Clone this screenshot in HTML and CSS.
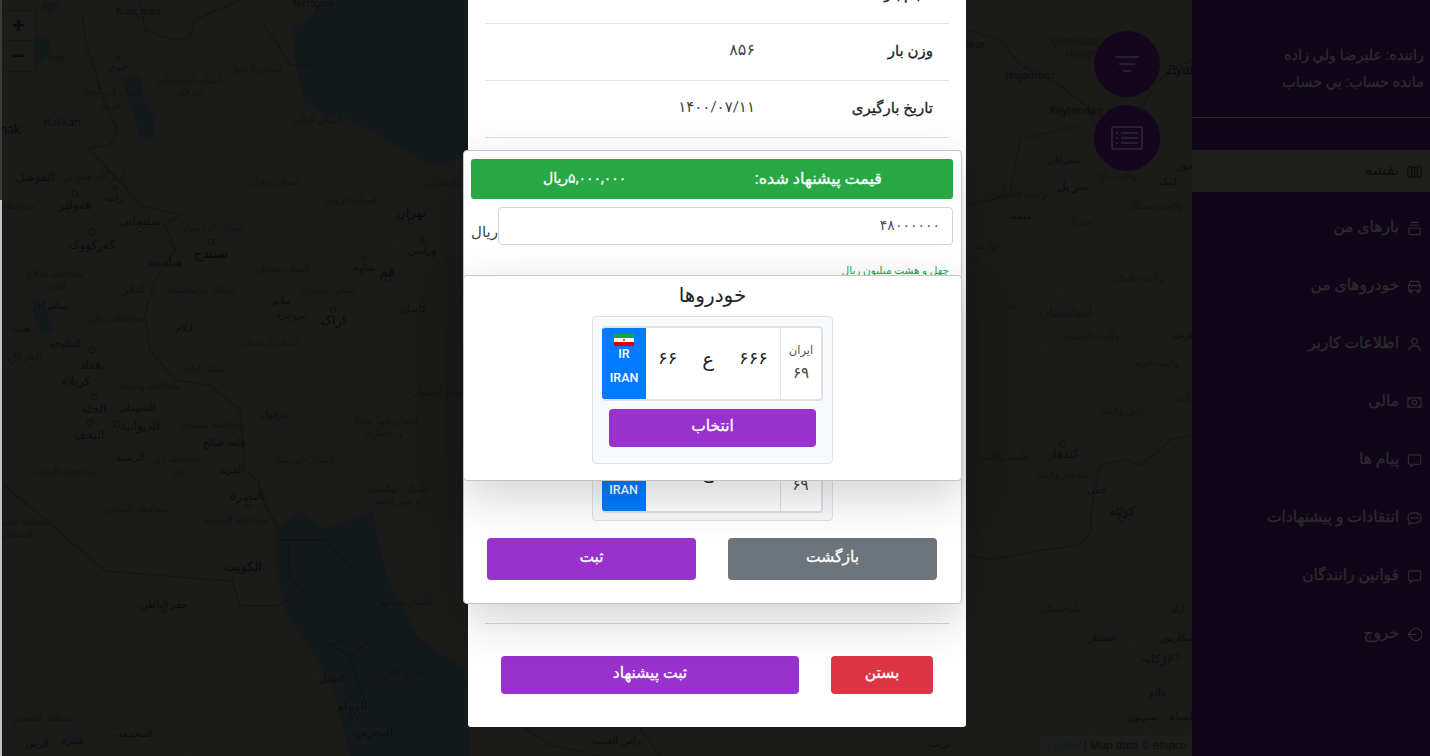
FILE: index.html
```html
<!DOCTYPE html>
<html lang="fa">

<head>
  <meta charset="UTF-8">
  <title>نقشه</title>
  <link rel="stylesheet" href="styles.css">
</head>

<body>
  <div class="page">
    <main class="map-area">
      <svg class="map" viewBox="0 0 1192 756" width="1192" height="756">
        <!-- water -->
        <path class="water" d="M322 0L306 22 293 30 296 62 304 100 318 112 345 119 368 128 400 148 432 165 470 156 470 0Z" />
        <path class="water" d="M276 530L300 512 322 528 352 520 372 510 378 540 388 580 420 640 470 672 470 756 350 756 345 735 330 680 305 640 285 610 277 570Z" />
        <path class="water" d="M122 78L140 76 143 100 155 118 152 138 140 138 133 112Z" />
        <path class="water" d="M36 36L50 40 48 55 38 65 34 50Z" />
        <path class="water" d="M33 297L46 305 52 330 44 334 34 318Z" />
        <path class="water" d="M70 735L82 735 76 745Z" />
        <!-- countries -->
        <path class="border" d="M82 15L86 45 95 70 103 100 118 130 110 145 88 148 128 190 140 205 180 215 165 225 175 250 155 280 145 315 150 350 175 380 210 385 240 410 245 470 258 480 265 505 280 530" />
        <path class="border" d="M2 483L105 571 190 578 232 581 240 605 243 606 277 606 303 590 290 580 288 540" />
        <path class="border-thin" d="M280 540L325 540 385 605 470 690M290 606L330 645 345 640M330 645L350 655 370 640 350 660 365 700" />
        <path class="border" d="M140 0L145 30 172 40 190 38 195 20 240 0M260 20L275 40 290 65 312 65" />
        <path class="border" d="M968 30L1000 40 1020 65 1060 85 1085 105 1100 130 1140 110 1155 85 1170 70 1192 60M968 205L1010 195 1020 140 1080 125" />
        <path class="border" d="M968 555L990 560 1030 552 1080 545 1092 530 1090 520 1095 490 1100 465 1125 460 1140 465 1160 450 1170 440 1192 435" />
        <!-- provinces -->
        <path class="prov" d="M170 85L200 130 230 160 250 135 280 155 310 165 330 185 350 195 380 210 411 220 440 210M200 130L170 170 130 190M250 135L240 165 250 200 290 220 300 260 330 250 360 260 400 240M210 240L220 280 250 300 290 295 310 340 300 380M290 295L340 300 370 270 400 240M310 340L360 320 400 350 440 380M300 380L350 420 400 390 460 430M350 420L370 470 420 500 470 540" />
        <path class="prov" d="M0 200L60 195 110 180M60 195L70 240 130 270 150 300 180 310M70 240L30 270 0 290M60 300L90 350 130 360 170 380M2 360L60 400 50 470 110 440 130 400M130 400L200 470 240 470M110 440L190 490 260 500 235 560 240 600M2 640L100 590 165 610 300 665 340 690 360 730M165 610L150 690 130 735 70 720 0 680M70 720L130 735 190 756M320 670L290 700 300 756" />
        <path class="prov" d="M968 200L1010 175 1050 200 1100 190 1150 190 1192 190M968 270L1040 250 1110 240 1192 230M1020 250L1060 290 1110 260 1150 300 1192 320M1060 290L1040 350 1090 360 1150 320M1020 440L1040 400 1100 370 1140 400 1192 420M1020 440L1010 560M1125 460L1150 500 1170 520 1190 600M1100 520L1080 600 1060 660 1040 690 990 660 968 700M1060 660L1090 650 1140 640 1192 620M1090 650L1090 756M1130 640L1150 756M1165 650L1192 756" />
        <path class="prov" d="M500 740L550 756M880 728L930 756M600 728L640 756" />
        <path class="border" d="M525 728L550 745 600 756M640 728L660 756" />

        <!-- places -->
        <g class="labels">
          <text class="it" x="50" y="10">Ağrı</text>
          <text class="lat" x="138" y="15">Naxçıvan</text>
          <text class="lat" x="313" y="7">Neftçala</text>
          <text class="it" x="56" y="62">Van</text>
          <text class="town" x="118" y="70">خوی</text>
          <text class="prv" x="256" y="72">استان اردبیل</text>
          <text class="prv" x="190" y="83">استان آذربایجان</text>
          <text class="prv" x="190" y="95">شرقی</text>
          <text class="prv" x="111" y="95">استان آذربایجان</text>
          <text class="prv" x="111" y="108">غربی</text>
          <text class="lat" x="62" y="126">Hakkari</text>
          <text class="lat-big" x="10" y="134">nak</text>
          <text class="prv" x="318" y="123">استان گیلان</text>
          <text class="city" x="35" y="181">الموصل</text>
          <text class="prv" x="96" y="180">پارێزگای هەولێر</text>
          <text class="prv" x="274" y="185">استان زنجان</text>
          <text class="prv" x="444" y="186">مازندران</text>
          <text class="prv" x="350" y="203">استان قزوین</text>
          <text class="town" x="114" y="201">رانیه</text>
          <text class="city" x="75" y="209">هەولێر</text>
          <text class="prv" x="19" y="209">محافظة</text>
          <text class="big" x="411" y="217">تهران</text>
          <text class="city" x="140" y="225">سلێمانی</text>
          <text class="prv" x="211" y="231">استان کردستان</text>
          <text class="city" x="92" y="249">کەرکووک</text>
          <text class="big" x="211" y="258">سنندج</text>
          <text class="town" x="422" y="254">ورامین</text>
          <text class="town" x="165" y="266">هەڵەبجە</text>
          <text class="town" x="364" y="271">ساوه</text>
          <text class="prv" x="282" y="272">استان همدان</text>
          <text class="big" x="387" y="276">قم</text>
          <text class="prv" x="55" y="277">محافظة صلاح</text>
          <text class="prv" x="55" y="289">الدين</text>
          <text class="town" x="134" y="293">کەلار</text>
          <text class="prv" x="202" y="293">استان کرمانشاه</text>
          <text class="prv" x="329" y="293">استان مرکزی</text>
          <text class="town" x="281" y="304">ملایر</text>
          <text class="town" x="291" y="318">بروجرد</text>
          <text class="town" x="413" y="312">کاشان</text>
          <text class="town" x="53" y="309">سامراء</text>
          <text class="big" x="333" y="325">اراک</text>
          <text class="prv" x="116" y="322">محافظة دیالى</text>
          <text class="town" x="21" y="332">هیت</text>
          <text class="town" x="184" y="332">ایلام</text>
          <text class="town" x="65" y="347">الفلوجة</text>
          <text class="prv" x="270" y="346">استان لرستان</text>
          <text class="prv-big" x="25" y="360">العراق</text>
          <text class="city" x="92" y="369">بغداد</text>
          <text class="prv" x="205" y="372">استان ایلام</text>
          <text class="city" x="76" y="385">کربلاء</text>
          <text class="prv" x="150" y="389">محافظة واسط</text>
          <text class="prv" x="440" y="395">استان اصفهان</text>
          <text class="city" x="94" y="413">الحلة</text>
          <text class="town" x="137" y="411">الشوملي</text>
          <text class="city" x="140" y="430">الدیوانیة</text>
          <text class="city" x="89" y="439">النجف</text>
          <text class="town" x="274" y="418">دزفول</text>
          <text class="prv" x="213" y="428">محافظة میسان</text>
          <text class="town" x="224" y="446">قلعة صالح</text>
          <text class="prv" x="384" y="424">استان چهارمحال</text>
          <text class="prv" x="384" y="436">و بختیاری</text>
          <text class="town" x="130" y="461">الرمیثة</text>
          <text class="prv" x="177" y="462">محافظة ذی</text>
          <text class="prv" x="177" y="476">قار</text>
          <text class="prv" x="301" y="463">استان خوزستان</text>
          <text class="town" x="231" y="473">القرنة</text>
          <text class="prv" x="65" y="475">محافظة النجف</text>
          <text class="prv" x="397" y="492">استان کهگیلویه</text>
          <text class="prv" x="397" y="504">و بویر احمد</text>
          <text class="city" x="247" y="500">البصرة</text>
          <text class="prv" x="137" y="512">محافظة المثنى</text>
          <text class="prv" x="236" y="523">محافظة البصرة</text>
          <text class="prv" x="20" y="525">منطقة الحدود</text>
          <text class="prv" x="15" y="537">الشمالية</text>
          <text class="big" x="243" y="571">الکویت</text>
          <text class="prv" x="405" y="605">استان بوشهر</text>
          <text class="town" x="164" y="608">حفر الباطن</text>
          <text class="prv" x="400" y="676">الخليج العربي</text>
          <text class="town" x="332" y="682">الجبیل</text>
          <text class="city" x="352" y="710">الدمام</text>
          <text class="city" x="374" y="736">البحرین</text>
          <text class="prv" x="43" y="721">منطقة القصيم</text>
          <text class="town" x="135" y="737">المجمعة</text>
          <text class="town" x="73" y="744">عنیزة</text>
          <text class="town" x="37" y="747">الرس</text>
          <text class="town" x="616" y="744">رأس الخيمة</text>
          <text class="town" x="940" y="747">تربت</text>

          <text class="it" x="1081" y="45">Qashqadaryo</text>
          <text class="it" x="1081" y="57">Viloyati</text>
          <text class="lat" x="975" y="48">akar</text>
          <text class="lat" x="1030" y="79">Hojambaz</text>
          <text class="lat" x="1076" y="114">Köytendag</text>
          <text class="lat-big" x="1180" y="74">Душ</text>
          <text class="town" x="1064" y="163">شبرغان</text>
          <text class="prv" x="1117" y="179">ولایت بلخ</text>
          <text class="city" x="1073" y="190">سر پل</text>
          <text class="town" x="1168" y="185">ایبک</text>
          <text class="town" x="1186" y="169">جوز</text>
          <text class="prv" x="1020" y="197">ولایت فاریاب</text>
          <text class="prv" x="1154" y="209">ولایت سمنگان</text>
          <text class="town" x="1020" y="219">میمنه</text>
          <text class="prv" x="1080" y="225">سرپل</text>
          <text class="prv" x="985" y="249">ولایت</text>
          <text class="prv" x="1138" y="281">ولایت بامیان</text>
          <text class="prv" x="1011" y="308">غور</text>
          <text class="prv-big" x="1066" y="317">افغانستان</text>
          <text class="prv" x="1091" y="339">ولایت دایکندی</text>
          <text class="town" x="1184" y="338">غزنی</text>
          <text class="prv" x="1155" y="366">ولایت غزنی</text>
          <text class="prv" x="1183" y="401">ولایت</text>
          <text class="prv" x="1122" y="414">زابل ولایت</text>
          <text class="prv" x="1005" y="460">هلمند ولایت</text>
          <text class="city" x="1063" y="458">کندهار</text>
          <text class="prv" x="1062" y="478">کندهار ولایت</text>
          <text class="town" x="1097" y="493">چمن</text>
          <text class="city" x="1122" y="515">کوئٹه</text>
          <text class="prv" x="1060" y="612">بلوچستان</text>
          <text class="town" x="1103" y="641">خضدار</text>
          <text class="town" x="1178" y="613">آباد</text>
          <text class="town" x="1178" y="641">شکارپور</text>
          <text class="city" x="1157" y="663">لاڑکانہ</text>
          <text class="town" x="1157" y="696">دادو</text>
          <text class="town" x="1142" y="720">سیہون</text>
          <text class="town" x="1181" y="720">ابشاہ</text>
        </g>

        <g class="dots">
          <circle cx="118" cy="58" r="2" />
          <circle cx="75" cy="193" r="3" />
          <circle cx="115" cy="188" r="2" />
          <circle cx="140" cy="229" r="3" />
          <circle cx="92" cy="232" r="3" />
          <circle cx="211" cy="242" r="3" />
          <circle cx="411" cy="221" r="3" />
          <circle cx="422" cy="241" r="2" />
          <circle cx="364" cy="258" r="2" />
          <circle cx="388" cy="279" r="3" />
          <circle cx="333" cy="310" r="3" />
          <circle cx="92" cy="350" r="3" />
          <circle cx="94" cy="397" r="3" />
          <circle cx="90" cy="423" r="3" />
          <circle cx="117" cy="424" r="3" />
          <circle cx="248" cy="504" r="3" />
          <circle cx="164" cy="611" r="2" />
          <circle cx="352" cy="714" r="3" />
          <circle cx="1063" cy="444" r="3" />
          <circle cx="1122" cy="519" r="3" />
          <circle cx="1176" cy="657" r="3" />
        </g>
      </svg>

      <div class="zoom-control">
        <button class="zoom-btn zoom-btn-top">+</button>
        <button class="zoom-btn">&minus;</button>
      </div>

      <div class="attribution"><span class="attr-link">Leaflet</span> | Map data © efspco</div>

      <button class="fab fab-filter">
        <svg width="24" height="18" viewBox="0 0 24 18">
          <path d="M0 2H24M4 9H20M8 16H16" />
        </svg>
      </button>
      <button class="fab fab-list">
        <svg width="32" height="24" viewBox="0 0 32 24">
          <rect x="1" y="1" width="30" height="22" rx="1" />
          <path d="M10 7H27M10 12H27M10 17H27M5 7H7M5 12H7M5 17H7" />
        </svg>
      </button>
    </main>

    <aside class="sidebar">
      <div class="driver">
        <p>راننده: علیرضا ولي زاده</p>
        <p>مانده حساب: بي حساب</p>
      </div>
      <nav class="nav">
        <a class="nav-item active">
          <svg viewBox="0 0 16 16"><path d="M1 3C3 2 5 2 8 4 11 2 13 2 15 3V14C13 13 11 13 8 14.500 5 13 3 13 1 14ZM5 3V13M11 3V13M8 4V14" /></svg>
          <span>نقشه</span>
        </a>
        <a class="nav-item">
          <svg viewBox="0 0 16 16"><path d="M4 1.500H12M3 4.500H13M3 7.500H13A1 1 0 0 1 14 8.500V13.500A1 1 0 0 1 13 14.500H3A1 1 0 0 1 2 13.500V8.500A1 1 0 0 1 3 7.500Z" /></svg>
          <span>بارهای من</span>
        </a>
        <a class="nav-item">
          <svg viewBox="0 0 16 16"><path d="M2 7L3.500 2.500H12.500L14 7ZM1.500 7H14.500V12H1.500ZM3 12V14H5V12M11 12V14H13V12M4 9.500H5M11 9.500H12" /></svg>
          <span>خودروهای من</span>
        </a>
        <a class="nav-item">
          <svg viewBox="0 0 16 16"><circle cx="8" cy="4.500" r="3" /><path d="M2 15C2 11 4.500 9.500 8 9.500S14 11 14 15" /></svg>
          <span>اطلاعات کاربر</span>
        </a>
        <a class="nav-item">
          <svg viewBox="0 0 16 16"><rect x="1" y="3" width="14" height="10" /><circle cx="8" cy="8" r="2.500" /><path d="M1.500 5.500L3.500 3.500M12.500 3.500L14.500 5.500M1.500 10.500L3.500 12.500M12.500 12.500L14.500 10.500" /></svg>
          <span>مالی</span>
        </a>
        <a class="nav-item">
          <svg viewBox="0 0 16 16"><path d="M2.500 2H13.500A1 1 0 0 1 14.500 3V11A1 1 0 0 1 13.500 12H7L4 14.500V12H2.500A1 1 0 0 1 1.500 11V3A1 1 0 0 1 2.500 2Z" /></svg>
          <span>پیام ها</span>
        </a>
        <a class="nav-item">
          <svg viewBox="0 0 16 16"><path d="M8 2C12 2 15 4 15 7.500S12 13 8 13C7 13 6 12.800 5 12.500L2 14 2.800 11C1.500 10 1 9 1 7.500 1 4 4 2 8 2Z" /><path class="dots-line" d="M5 7.500H5.100M8 7.500H8.100M11 7.500H11.100" /></svg>
          <span>انتقادات و پیشنهادات</span>
        </a>
        <a class="nav-item">
          <svg viewBox="0 0 16 16"><path d="M2.500 2H13.500A1 1 0 0 1 14.500 3V11A1 1 0 0 1 13.500 12H7L4 14.500V12H2.500A1 1 0 0 1 1.500 11V3A1 1 0 0 1 2.500 2Z" /></svg>
          <span>قوانین رانندگان</span>
        </a>
        <a class="nav-item">
          <svg viewBox="0 0 16 16"><path d="M4 4.500A6.500 6.500 0 1 1 4 11.500M10 8H1M4.500 4.500L1 8 4.500 11.500" /></svg>
          <span>خروج</span>
        </a>
      </nav>
    </aside>

    <div class="edge"></div>

    <section class="modal">
      <div class="info-row"><b>حجم بار</b><span>۹</span></div>
      <div class="info-row"><b>وزن بار</b><span>۸۵۶</span></div>
      <div class="info-row"><b>تاریخ بارگیری</b><span class="date">۱۴۰۰/۰۷/۱۱</span></div>
      <div class="modal-space"></div>
      <div class="modal-footer">
        <button class="btn btn-red btn-close">بستن</button>
        <button class="btn btn-purple btn-offer">ثبت پیشنهاد</button>
      </div>
    </section>

    <section class="panel panel-offer">
      <div class="price-bar">
        <span class="price-label">قیمت پیشنهاد شده:</span>
        <span>۵,۰۰۰,۰۰۰ریال</span>
      </div>
      <div class="price-input">
        <input class="input" value="۴۸۰۰۰۰۰۰">
        <span class="unit">ریال</span>
      </div>
      <small class="price-words">چهل و هشت میلیون ریال</small>
      <div class="car-card car-card-low">
        <div class="plate">
          <div class="plate-region"><small>ایران</small><span>۶۹</span></div>
          <div class="plate-number"><span>۶۶۶</span><span class="plate-letter">ع</span><span>۶۶</span></div>
          <div class="plate-country">
            <svg class="flag" width="20" height="12" viewBox="0 0 20 12">
              <rect width="20" height="4" fill="#239f40" />
              <rect y="4" width="20" height="4" fill="#fff" />
              <rect y="8" width="20" height="4" fill="#da0000" />
              <circle cx="10" cy="6" r="1.300" fill="#da6060" />
            </svg>
            <span>IR</span>
            <span>IRAN</span>
          </div>
        </div>
      </div>
      <div class="panel-actions">
        <button class="btn btn-grey btn-half">بازگشت</button>
        <button class="btn btn-purple btn-half">ثبت</button>
      </div>
    </section>

    <section class="panel panel-cars">
      <h3 class="cars-title">خودروها</h3>
      <div class="car-card">
        <div class="plate">
          <div class="plate-region"><small>ایران</small><span>۶۹</span></div>
          <div class="plate-number"><span>۶۶۶</span><span class="plate-letter">ع</span><span>۶۶</span></div>
          <div class="plate-country">
            <svg class="flag" width="20" height="12" viewBox="0 0 20 12">
              <rect width="20" height="4" fill="#239f40" />
              <rect y="4" width="20" height="4" fill="#fff" />
              <rect y="8" width="20" height="4" fill="#da0000" />
              <circle cx="10" cy="6" r="1.300" fill="#da6060" />
            </svg>
            <span>IR</span>
            <span>IRAN</span>
          </div>
        </div>
        <button class="btn btn-purple btn-pick">انتخاب</button>
      </div>
    </section>
  </div>
</body>

</html>
```

FILE: styles.css
```css
html,
body {
  margin: 0;
  padding: 0;
  height: 100%;
  overflow: hidden;
}

body {
  font-family: Roboto, "DejaVu Sans", sans-serif;
  font-size: 14px;
  color: #212529;
  background-color: #1b1b19;
}

.page {
  position: relative;
  display: flex;
  height: 756px;
  overflow: hidden;
}

button {
  font-family: inherit;
  cursor: pointer;
}

/* map */
.map-area {
  position: relative;
  flex: 1;
  background-color: #1b1b19;
}

.map {
  display: block;
}

.water {
  fill: #14191c;
}

.border {
  fill: none;
  stroke: #151514;
  stroke-width: 1.2;
}

.border-thin {
  fill: none;
  stroke: #0f1316;
  stroke-width: 1;
}

.prov {
  fill: none;
  stroke: #261e1d;
  stroke-width: 0.7;
}

.labels text {
  font-family: "Noto Sans", "DejaVu Sans", sans-serif;
  text-anchor: middle;
}

.labels .lat {
  font-size: 10.5px;
  fill: #0e0e0d;
}

.labels .lat-big {
  font-size: 12px;
  fill: #0a0a0a;
}

.labels .city {
  font-size: 12px;
  fill: #0e0e0d;
}

.labels .big {
  font-size: 13px;
  fill: #0a0a0a;
}

.labels .town {
  font-size: 10px;
  fill: #0e0e0d;
}

.labels .prv {
  font-size: 10px;
  fill: #121211;
  opacity: 0.7;
}

.labels .prv-big {
  font-size: 13px;
  fill: #121211;
  opacity: 0.7;
}

.labels .it {
  font-size: 10px;
  font-style: italic;
  fill: #121211;
  opacity: 0.8;
}

.dots circle {
  fill: none;
  stroke: #0e0e0d;
  stroke-width: 0.8;
}

.zoom-control {
  position: absolute;
  top: 10px;
  left: 3px;
  width: 31px;
  border: 1px solid #151514;
  border-radius: 2px;
}

.zoom-btn {
  display: block;
  width: 100%;
  height: 30px;
  padding: 0 2px 0 0;
  border: 0;
  font-family: "Liberation Sans", sans-serif;
  font-size: 22px;
  font-weight: 700;
  line-height: 28px;
  color: #0b0b0a;
  background-color: #1c1c1a;
}

.zoom-btn-top {
  border-bottom: 1px solid #151514;
}

.attribution {
  position: absolute;
  right: 0;
  bottom: 0;
  padding: 3px 5px 3px 5px;
  font-family: "Liberation Sans", sans-serif;
  font-size: 11.500px;
  line-height: 15px;
  color: #0e0e0d;
  background-color: #1e1e1c;
}

.attr-link {
  color: #0e1e29;
}

.fab {
  position: absolute;
  left: 1094px;
  display: flex;
  align-items: center;
  justify-content: center;
  width: 66px;
  height: 66px;
  padding: 0;
  border: 0;
  border-radius: 50%;
  background-color: #15061d;
}

.fab-filter {
  top: 31px;
}

.fab-list {
  top: 105px;
}

.fab svg {
  fill: none;
  stroke: #2c2a30;
  stroke-width: 1.6;
}

/* sidebar */
.sidebar {
  width: 238px;
  flex: none;
  background-color: #110518;
  direction: rtl;
}

.driver {
  height: 118px;
  box-sizing: border-box;
  padding-top: 42px;
  padding-right: 6px;
  border-bottom: 1px solid #2a272d;
  font-size: 14.500px;
  color: #2b2a2e;
  -webkit-text-stroke: 0.3px #2b2a2e;
}

.driver p {
  margin: 0;
  line-height: 27px;
}

.nav {
  display: flex;
  flex-direction: column;
  gap: 15.875px;
  margin-top: 32px;
}

.nav-item {
  display: flex;
  align-items: center;
  height: 42px;
  padding-right: 8px;
  font-size: 15.500px;
  color: #2b2a2e;
  -webkit-text-stroke: 0.3px #2b2a2e;
}

.nav-item span {
  padding-bottom: 3px;
}

.nav-item svg {
  width: 15px;
  height: 15px;
  margin-left: 8px;
  fill: none;
  stroke: #2f2d32;
  stroke-width: 1.200;
}

.dots-line {
  stroke-width: 2;
  stroke-linecap: round;
}

.nav-item.active {
  color: #0e0e0d;
  background-color: #1e1e1c;
  -webkit-text-stroke: 0;
}

.nav-item.active svg {
  stroke: #0e0e0d;
}

.edge {
  position: absolute;
  top: 0;
  left: 0;
  width: 2px;
  height: 756px;
  background: linear-gradient(#3b3b3a 0, #3b3b3a 200px, #c4c4c4 200px, #c4c4c4 100%);
}

/* modal */
.modal {
  position: absolute;
  left: 468px;
  bottom: 29px;
  box-sizing: border-box;
  width: 498px;
  padding: 0 17px;
  border-radius: 3px;
  background-color: #fff;
  direction: rtl;
}

.info-row {
  display: grid;
  grid-template-columns: 178px 1fr;
  align-items: center;
  height: 56px;
  padding-right: 16px;
  border-bottom: 1px solid #dee2e6;
}

.info-row b {
  padding-bottom: 2px;
  font-size: 15px;
  font-weight: 400;
  -webkit-text-stroke: 0.3px #212529;
}

.info-row span {
  padding-bottom: 5px;
  font-size: 16px;
  color: #444;
}

.info-row .date {
  font-size: 15px;
  letter-spacing: -1px;
}

.modal-space {
  height: 485px;
  border-bottom: 1px solid #d4d6d8;
}

.modal-footer {
  display: flex;
  gap: 32px;
  padding: 32px 16px 33px;
}

.btn {
  height: 38px;
  padding: 0 0 4px;
  border: 0;
  border-radius: 4px;
  font-size: 15.500px;
  font-weight: 400;
  color: #fff;
  -webkit-text-stroke: 0.3px #fff;
}

.btn-red {
  background-color: #dc3545;
}

.btn-purple {
  background-color: #9932cc;
}

.btn-grey {
  background-color: #6c757d;
}

.btn-close {
  width: 102px;
}

.btn-offer {
  width: 298px;
}

/* panels over the modal */
.panel {
  position: absolute;
  left: 463px;
  box-sizing: border-box;
  width: 499px;
  border: 1px solid #c4c4c4;
  border-radius: 4px;
  background-color: #fff;
  box-shadow: 0 16px 48px rgba(0, 0, 0, 0.175);
  direction: rtl;
}

.panel-offer {
  top: 150px;
  height: 454px;
  padding: 8px 8px 0 7px;
}

.panel-cars {
  top: 275px;
  height: 206px;
}

.price-bar {
  display: flex;
  justify-content: space-between;
  align-items: center;
  box-sizing: border-box;
  height: 40px;
  padding: 0 71px 2px 72px;
  border-radius: 3px;
  font-size: 14px;
  color: #fff;
  background-color: #28a745;
  -webkit-text-stroke: 0.3px #fff;
}

.price-label {
  font-size: 16px;
}

.price-input {
  display: flex;
  align-items: flex-end;
  margin-top: 8px;
}

.input {
  box-sizing: border-box;
  width: 456px;
  height: 38px;
  padding: 0 12px 3px;
  border: 1px solid #ced4da;
  border-radius: 4px;
  font-family: inherit;
  font-size: 14px;
  color: #495057;
  text-align: right;
  direction: rtl;
}

.unit {
  height: 22px;
  font-size: 15px;
  color: #444;
  line-height: 18px;
}

.price-words {
  display: block;
  margin-top: 19px;
  padding-right: 4px;
  font-size: 10.500px;
  line-height: 13px;
  color: #28a745;
}

.car-card {
  box-sizing: border-box;
  width: 241px;
  margin: 0 auto;
  padding: 9px 9px 0;
  border: 1px solid #dee2e6;
  border-radius: 4px;
  background-color: #f8f9fa;
}

.car-card-low {
  height: 93px;
  margin-top: 151px;
}

.panel-cars .car-card {
  height: 148px;
}

.plate {
  display: flex;
  height: 75px;
  box-sizing: border-box;
  border: 2px solid #dee2e6;
  border-left: 0;
  border-radius: 4px;
  background-color: #fff;
  overflow: hidden;
}

.plate-region {
  display: flex;
  flex-direction: column;
  align-items: center;
  width: 40px;
  flex: none;
  border-left: 1px solid #dee2e6;
  font-size: 15px;
  color: #444;
}

.plate-region small {
  margin-top: 14px;
  margin-bottom: 3px;
  font-size: 11.500px;
  line-height: 16px;
  color: #555;
}

.plate-region span {
  line-height: 24px;
}

.plate-number {
  display: flex;
  flex: 1;
  justify-content: space-between;
  padding: 18px 12px 0 12px;
  font-size: 18px;
  color: #212529;
}

.plate-number span {
  line-height: 24px;
}

.plate-letter {
  padding-top: 1px;
  font-size: 20px;
}

.plate-country {
  display: flex;
  flex-direction: column;
  align-items: center;
  justify-content: flex-start;
  width: 44px;
  flex: none;
  padding-top: 6px;
  box-sizing: border-box;
  font-size: 12.500px;
  font-weight: 500;
  color: #fff;
  background-color: #007bff;
}

.plate-country span {
  line-height: 24px;
}

.flag {
  display: block;
  margin-bottom: -4px;
}

.btn-pick {
  display: block;
  width: 207px;
  margin: 8px auto 0;
}

.cars-title {
  margin: 6px 0 8px;
  font-size: 20px;
  font-weight: 400;
  line-height: 26px;
  text-align: center;
  color: #212529;
}

.panel-actions {
  display: flex;
  justify-content: space-between;
  margin-top: 17px;
  padding: 0 16px;
}

.btn-half {
  width: 209px;
  height: 42px;
}
```
